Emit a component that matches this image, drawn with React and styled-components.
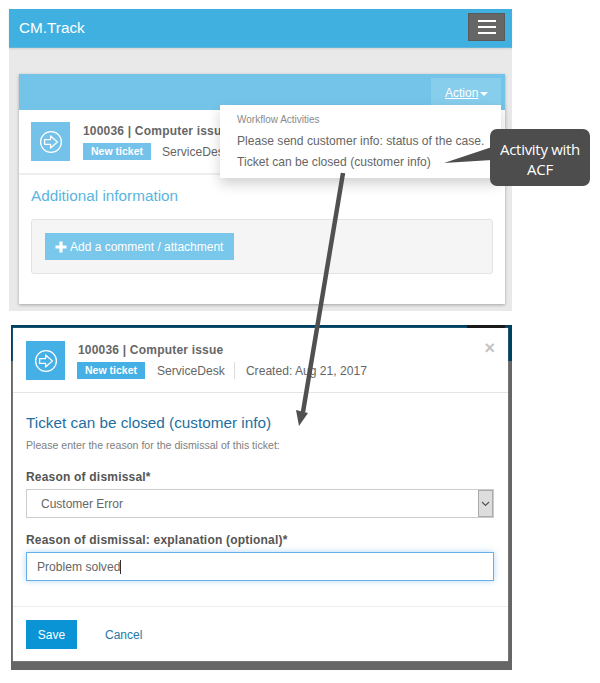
import React from 'react';
import styled, { createGlobalStyle } from 'styled-components';

const Global = createGlobalStyle`
  html, body { margin: 0; padding: 0; background: #fff; }
  body { font-family: "Liberation Sans", Arial, sans-serif; color: #666; font-size: 12px; }
  * { box-sizing: border-box; }
`;

const Page = styled.div`
  position: relative;
  width: 600px;
  height: 683px;
  padding-top: 9px;
  overflow: hidden;
`;

/* top screenshot */
const Screen = styled.div`
  margin-left: 9px;
  width: 503px;
  height: 302px;
  background: #e9e9e9;
`;

const Navbar = styled.div`
  height: 39px;
  background: #3fb0e0;
  border-bottom: 1px solid #5fb5da;
  box-shadow: 0 1px 2px rgba(0, 0, 0, 0.1);
  display: flex;
  align-items: flex-start;
  justify-content: space-between;
  padding: 4px 7px 0 10px;
`;

const Brand = styled.div`
  font-size: 15.3px;
  line-height: 30px;
  color: #fff;
`;

const Burger = styled.div`
  width: 37px;
  height: 28px;
  background: #666;
  border: 1px solid #5a5a5a;
  display: flex;
  flex-direction: column;
  justify-content: center;
  align-items: center;
  gap: 4px;
`;

const BurgerBar = styled.span`
  width: 18px;
  height: 2px;
  background: #fff;
`;

const Card = styled.div`
  margin: 26px 7px 0 10px;
  height: 230px;
  background: #fff;
  box-shadow: 0 1px 3px rgba(0, 0, 0, 0.3);
`;

const CardHead = styled.div`
  position: relative;
  height: 36px;
  background: #73c4e8;
  display: flex;
  justify-content: flex-end;
  padding: 4px 4px 0 0;
`;

const ActionButton = styled.div`
  width: 70px;
  height: 27px;
  background: #87cdec;
  padding: 8px 0 0 14px;
  color: #fff;
  font-size: 12px;
  display: flex;
  align-items: flex-start;
  gap: 2px;
`;

const ActionLabel = styled.span`
  text-decoration: underline;
`;

const Caret = styled.span`
  width: 0;
  height: 0;
  margin-top: 6px;
  border-left: 4px solid transparent;
  border-right: 4px solid transparent;
  border-top: 4px solid #fff;
`;

const Menu = styled.div`
  position: absolute;
  left: 201px;
  top: 31px;
  width: 281px;
  height: 73px;
  background: #fff;
  box-shadow: 0 6px 12px rgba(0, 0, 0, 0.18);
  padding: 8px 17px;
  z-index: 2;
`;

const MenuHeading = styled.div`
  font-size: 10px;
  line-height: 14px;
  margin-bottom: 4px;
  color: #8a8a8a;
`;

const MenuItem = styled.div`
  font-size: 12.1px;
  line-height: 21px;
  color: #666;
  white-space: nowrap;
`;

const TicketRow = styled.div`
  height: 65px;
  border-bottom: 2px solid #eee;
  display: flex;
  gap: 13px;
  padding: 12px 0 0 12px;
`;

const TicketIcon = styled.div`
  width: ${p => p.$size}px;
  height: ${p => p.$size}px;
  flex: none;
  background: ${p => p.$bg};
  display: flex;
  align-items: center;
  justify-content: center;
`;

const TicketText = styled.div`
  display: flex;
  flex-direction: column;
  gap: 4px;
  padding-top: 1px;
`;

const TicketTitle = styled.div`
  font-size: 12px;
  line-height: 16px;
  font-weight: 700;
  color: #666;
  letter-spacing: 0.2px;
  white-space: nowrap;
`;

const TicketMeta = styled.div`
  display: flex;
  align-items: center;
  height: 17px;
  font-size: 12.1px;
  white-space: nowrap;
`;

const Badge = styled.span`
  width: 68px;
  height: 17px;
  margin-left: ${p => p.$shift}px;
  margin-right: ${p => p.$after}px;
  background: ${p => p.$bg};
  color: #fff;
  font-size: 10.5px;
  font-weight: 700;
  line-height: 17px;
  text-align: center;
`;

const CardBody = styled.div`
  padding: 10px 12px 0;
`;

const SectionTitle = styled.div`
  font-size: 15.3px;
  line-height: 22px;
  color: #59b5e0;
`;

const Well = styled.div`
  margin-top: 12px;
  height: 55px;
  background: #f5f5f5;
  border: 1px solid #e3e3e3;
  border-radius: 3px;
  padding: 13px;
`;

const AddButton = styled.div`
  width: 189px;
  height: 27px;
  background: #79c7ea;
  color: #fff;
  font-size: 12px;
  line-height: 27px;
  padding: 1px 0 0 10px;
  display: flex;
  align-items: center;
  gap: 3px;
`;

/* bottom screenshot */
const Backdrop = styled.div`
  position: relative;
  margin: 14px 0 0 11px;
  width: 501px;
  height: 345px;
  background: linear-gradient(#004060 36px, #666 36px);
  padding: 3px 4px 9px 2px;
`;

const BackdropBurger = styled.div`
  position: absolute;
  right: 7px;
  top: 0;
  width: 38px;
  height: 3px;
  background: #1a1a1a;
`;

const Modal = styled.div`
  height: 100%;
  background: #fff;
  display: flex;
  flex-direction: column;
  box-shadow: 0 0 1px rgba(255, 255, 255, 0.6);
`;

const ModalHead = styled.div`
  position: relative;
  height: 65px;
  border-bottom: 1px solid #e5e5e5;
  display: flex;
  gap: 13px;
  padding: 13px 0 0 13px;
`;

const CloseMark = styled.span`
  position: absolute;
  right: 13px;
  top: 10px;
  font-size: 18px;
  line-height: 20px;
  font-weight: 700;
  color: #c4c4c4;
`;

const Sep = styled.span`
  width: 1px;
  height: 17px;
  background: #ddd;
  margin: 0 11px 0 9px;
`;

const ModalBody = styled.div`
  flex: 1;
  padding: 20px 13px 0;
  border-bottom: 1px solid #eee;
`;

const ModalTitle = styled.div`
  font-size: 15.3px;
  line-height: 20px;
  color: #1d6f9f;
`;

const Hint = styled.div`
  font-size: 10.6px;
  line-height: 14px;
  margin-top: 5px;
  color: #808080;
`;

const Label = styled.div`
  font-size: 12px;
  line-height: 16px;
  font-weight: 700;
  color: #555;
  letter-spacing: 0.2px;
  margin-top: ${p => p.$top}px;
`;

const SelectBox = styled.div`
  margin-top: 4px;
  width: 468px;
  height: 29px;
  border: 1px solid #ccc;
  display: flex;
  align-items: center;
  justify-content: space-between;
  padding-left: 14px;
  font-size: 12px;
  color: #666;
`;

const SelectArrow = styled.div`
  width: 15px;
  height: 27px;
  background: #ddd;
  border: 1px solid #aaa;
  display: flex;
  align-items: center;
  justify-content: center;
`;

const InputBox = styled.div`
  margin-top: 4px;
  width: 468px;
  height: 29px;
  border: 1px solid #66afe9;
  box-shadow: 0 0 6px rgba(102, 175, 233, 0.5);
  display: flex;
  align-items: center;
  padding-left: 10px;
  font-size: 12.1px;
  color: #666;
`;

const TextCursor = styled.span`
  width: 1px;
  height: 14px;
  background: #333;
`;

const ModalFoot = styled.div`
  height: 54px;
  display: flex;
  align-items: flex-start;
  gap: 28px;
  padding: 13px 13px 0;
  font-size: 12px;
`;

const SaveButton = styled.div`
  width: 51px;
  height: 29px;
  background: #0a94d6;
  color: #fff;
  line-height: 30px;
  text-align: center;
`;

const CancelLink = styled.div`
  line-height: 30px;
  color: #2577a8;
`;

/* annotations lying over both shots */
const Callout = styled.div`
  position: absolute;
  left: 490px;
  top: 129px;
  width: 100px;
  height: 57px;
  background: #4d4d4d;
  border-radius: 7px;
  color: #fff;
  font-family: "Open Sans", sans-serif;
  font-size: 15px;
  line-height: 20px;
  letter-spacing: -0.3px;
  text-align: center;
  padding-top: 10px;
  z-index: 4;
`;

const Overlay = styled.svg`
  position: absolute;
  left: 0;
  top: 0;
  z-index: 3;
  pointer-events: none;
`;

const ArrowCircleIcon = ({ size }) => (
  <svg width={size} height={size} viewBox="0 0 24 24" fill="none" stroke="#fff" strokeWidth="1.3">
    <circle cx="12" cy="12" r="10.4" />
    <path d="M5.6 9.6h6V5.9l6.8 6.1-6.8 6.1v-3.7h-6z" strokeLinejoin="round" />
  </svg>
);

const Chevron = () => (
  <svg width="9" height="6" viewBox="0 0 9 6" fill="none" stroke="#555" strokeWidth="1.2">
    <path d="M1 1l3.5 3.5L8 1" />
  </svg>
);

const PlusIcon = () => (
  <svg width="12" height="12" viewBox="0 0 12 12" fill="#fff">
    <path d="M4.4 0.5h3.2v3.9h3.9v3.2H7.6v3.9H4.4V7.6H0.5V4.4h3.9z" />
  </svg>
);

export default function App() {
  return (
    <Page>
      <Global />

      <Screen>
        <Navbar>
          <Brand>CM.Track</Brand>
          <Burger>
            <BurgerBar />
            <BurgerBar />
            <BurgerBar />
          </Burger>
        </Navbar>
        <Card>
          <CardHead>
            <ActionButton>
              <ActionLabel>Action</ActionLabel>
              <Caret />
            </ActionButton>
            <Menu>
              <MenuHeading>Workflow Activities</MenuHeading>
              <MenuItem>Please send customer info: status of the case.</MenuItem>
              <MenuItem>Ticket can be closed (customer info)</MenuItem>
            </Menu>
          </CardHead>
          <TicketRow>
            <TicketIcon $size={39} $bg="#74c1ea">
              <ArrowCircleIcon size={24} />
            </TicketIcon>
            <TicketText>
              <TicketTitle>100036 | Computer issue</TicketTitle>
              <TicketMeta>
                <Badge $shift={0} $after={11} $bg="#74c1ea">New ticket</Badge>
                ServiceDesk
              </TicketMeta>
            </TicketText>
          </TicketRow>
          <CardBody>
            <SectionTitle>Additional information</SectionTitle>
            <Well>
              <AddButton>
                <PlusIcon />
                Add a comment / attachment
              </AddButton>
            </Well>
          </CardBody>
        </Card>
      </Screen>

      <Backdrop>
        <BackdropBurger />
        <Modal>
          <ModalHead>
            <TicketIcon $size={39} $bg="#45b0e6">
              <ArrowCircleIcon size={24} />
            </TicketIcon>
            <TicketText>
              <TicketTitle>100036 | Computer issue</TicketTitle>
              <TicketMeta>
                <Badge $shift={-1} $after={12} $bg="#45b0e6">New ticket</Badge>
                ServiceDesk
                <Sep />
                Created: Aug 21, 2017
              </TicketMeta>
            </TicketText>
            <CloseMark>×</CloseMark>
          </ModalHead>
          <ModalBody>
            <ModalTitle>Ticket can be closed (customer info)</ModalTitle>
            <Hint>Please enter the reason for the dismissal of this ticket:</Hint>
            <Label $top={17}>Reason of dismissal*</Label>
            <SelectBox>
              Customer Error
              <SelectArrow>
                <Chevron />
              </SelectArrow>
            </SelectBox>
            <Label $top={14}>Reason of dismissal: explanation (optional)*</Label>
            <InputBox>
              Problem solved
              <TextCursor />
            </InputBox>
          </ModalBody>
          <ModalFoot>
            <SaveButton>Save</SaveButton>
            <CancelLink>Cancel</CancelLink>
          </ModalFoot>
        </Modal>
      </Backdrop>

      <Callout>
        Activity with
        <br />
        ACF
      </Callout>
      <Overlay width="600" height="683" viewBox="0 0 600 683">
        <path d="M444 163L492 147V160z" fill="#4d4d4d" />
        <path d="M343 173L303 412" stroke="#505050" strokeWidth="4.5" fill="none" />
        <path d="M296 410L308 413L299 426z" fill="#505050" />
      </Overlay>
    </Page>
  );
}
